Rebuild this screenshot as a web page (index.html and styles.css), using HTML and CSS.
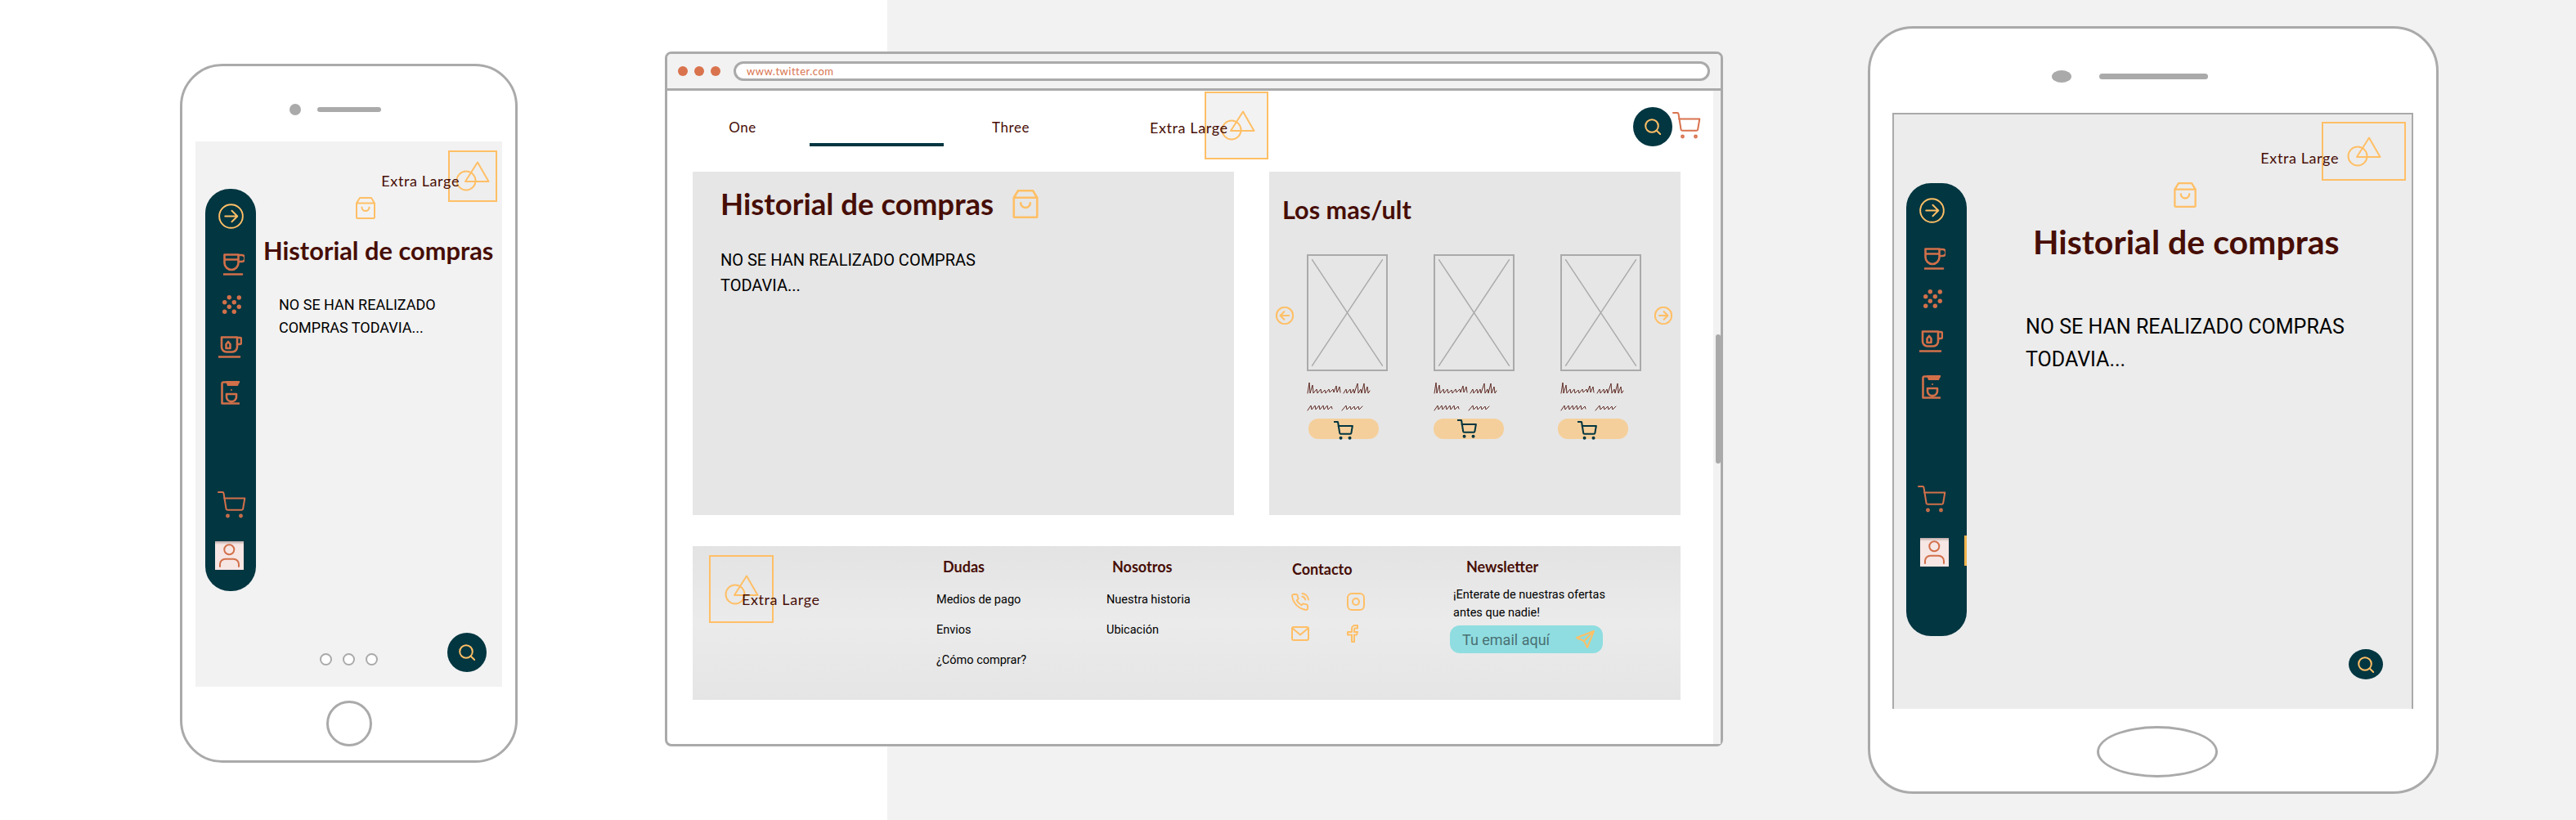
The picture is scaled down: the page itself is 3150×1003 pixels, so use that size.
FILE: index.html
```html
<!DOCTYPE html>
<html lang="es">
<head>
    <meta charset="UTF-8">
    <title>Historial de compras</title>
    <link rel="stylesheet" href="styles.css">
</head>
<body>
<svg class="sprite" xmlns="http://www.w3.org/2000/svg">
    <symbol id="i-logo" viewBox="0 0 42 37"><circle cx="13" cy="24" r="11.5"/><path d="M27 1.5 12 25h28.5z"/></symbol>
    <symbol id="i-arrow-r" viewBox="0 0 32 32"><circle cx="16" cy="16" r="14.8"/><path d="M8.5 16h15M17 9l7 7-7 7"/></symbol>
    <symbol id="i-arrow-l" viewBox="0 0 32 32"><circle cx="16" cy="16" r="14.8"/><path d="M23.5 16h-15M15 9l-7 7 7 7"/></symbol>
    <symbol id="i-cup" viewBox="0 0 26 27"><path d="M1.5 1.5h17v10a8.5 8.5 0 0 1-17 0zM1.5 7.5h17M18.5 2h4a2.5 2.5 0 0 1 0 8h-4M.5 25.5h22.5"/></symbol>
    <symbol id="i-dots" viewBox="0 0 23 23"><g class="solid"><circle cx="8.3" cy="2.7" r="2.7"/><circle cx="20.3" cy="3" r="2.7"/><circle cx="2.7" cy="8.7" r="2.7"/><circle cx="14.3" cy="8.7" r="2.7"/><circle cx="8.3" cy="14.3" r="2.7"/><circle cx="20.3" cy="14.3" r="2.7"/><circle cx="2.7" cy="20.3" r="2.7"/><circle cx="14.3" cy="20.3" r="2.7"/></g></symbol>
    <symbol id="i-tea" viewBox="0 0 29 27"><path d="M4 1.5h19v12a6 6 0 0 1-6 6h-7a6 6 0 0 1-6-6zM23 2h3.5a1.5 1.5 0 0 1 1.5 1.5v5a1.5 1.5 0 0 1-1.5 1.5H23M.5 25.5H26M9.5 10l2.5-3 2.500 3v5h-5z"/></symbol>
    <symbol id="i-machine" viewBox="0 0 23 29"><path d="M1.500 27.500V3a1.500 1.500 0 0 1 1.500-1.500h19M1.500 27.500H22M7 16h12v3.500a5.500 5.500 0 0 1-5.500 5.500H12.500A5.500 5.500 0 0 1 7 19.500z"/><path class="solid" d="M6 0h17l-2 6H8z"/><circle class="solid" cx="13" cy="11" r="1"/></symbol>
    <symbol id="i-cart" viewBox="0 0 35 33"><path d="M1 1h5a1.500 1.500 0 0 1 1.500 1.300L10.500 21a2 2 0 0 0 2 1.800h16.700a2 2 0 0 0 2-1.800L33.300 8.500H8"/><circle cx="12.500" cy="30" r="1.400"/><circle cx="28.500" cy="30" r="1.400"/></symbol>
    <symbol id="i-search" viewBox="0 0 20 20"><circle cx="9" cy="9" r="7.800"/><path d="M14.800 14.800 19.200 19"/></symbol>
    <symbol id="i-bag" viewBox="0 0 24 27"><path d="M1 7.500 5 1h14l4 6.500M1 7.500h22V25a1 1 0 0 1-1 1H2a1 1 0 0 1-1-1zM7.500 12.500a4.500 4.500 0 0 0 9 0"/></symbol>
    <symbol id="i-user" viewBox="0 0 35 35"><circle cx="17.300" cy="10.300" r="6"/><path d="M6 31v-3a6.500 6.500 0 0 1 6.500-6.300h10a6.500 6.500 0 0 1 6.500 6.300v3"/></symbol>
    <symbol id="i-phone" viewBox="0 0 24 24"><path d="M15.050 5A5 5 0 0 1 19 8.950M15.050 1A9 9 0 0 1 23 8.940m-1 7.980v3a2 2 0 0 1-2.180 2 19.790 19.790 0 0 1-8.630-3.070 19.500 19.500 0 0 1-6-6 19.790 19.790 0 0 1-3.070-8.670A2 2 0 0 1 4.110 2h3a2 2 0 0 1 2 1.720 12.840 12.840 0 0 0 .7 2.810 2 2 0 0 1-.45 2.110L8.090 9.910a16 16 0 0 0 6 6l1.270-1.270a2 2 0 0 1 2.110-.45 12.840 12.840 0 0 0 2.810.7A2 2 0 0 1 22 16.920z"/></symbol>
    <symbol id="i-insta" viewBox="0 0 22 22"><rect x="1" y="1" width="20" height="20" rx="5"/><circle cx="11" cy="11" r="4"/></symbol>
    <symbol id="i-mail" viewBox="0 0 22 18"><rect x="1" y="1" width="20" height="16" rx="2"/><path d="m1.500 2.500 9.500 8 9.500-8"/></symbol>
    <symbol id="i-fb" viewBox="0 0 14 22"><path d="M13 1h-3a4 4 0 0 0-4 4v4H1v3.500h5V21h3v-8.500h3l1-3.500H9V5.500a1 1 0 0 1 1-1h3z"/></symbol>
    <symbol id="i-send" viewBox="0 0 23 22"><path d="M22 1 1 9l9 4 4 8zM22 1 10 13"/></symbol>
    <symbol id="i-scribble" viewBox="0 0 82 36"><path d="M1 14 3 1l1 13 3-10 1 10 4-5 1 5 4-5 1 5 4-4 1 4 4-5 1 4 4-4 1 4 3-8 1 8 3-7 1 7M45 14l3-5 1 5 4-5 1 5 3-5 1 5 4-12 1 12 3-5 1 5 3-12 1 12 3-8 1 8 2-3M1 35l4-6 1 5 4-5 1 5 4-5 1 5 4-5 1 5 4-5 1 5 4-4 1 3M43 35l5-6 1 5 4-4 1 4 4-4 1 4 4-4 1 4 4-4"/></symbol>
</svg>

<div class="canvas">

    <!-- telefono -->
    <section class="device phone">
        <div class="device-top">
            <span class="camera"></span>
            <span class="speaker"></span>
        </div>
        <div class="screen">
            <nav class="sidebar">
                <svg class="ic side-arrow"><use href="#i-arrow-r"/></svg>
                <svg class="ic side-cup"><use href="#i-cup"/></svg>
                <svg class="ic side-dots"><use href="#i-dots"/></svg>
                <svg class="ic side-tea"><use href="#i-tea"/></svg>
                <svg class="ic side-machine"><use href="#i-machine"/></svg>
                <svg class="ic side-cart"><use href="#i-cart"/></svg>
                <div class="side-user"><svg class="ic"><use href="#i-user"/></svg></div>
            </nav>
            <div class="screen-main">
                <div class="brand">
                    <span class="brand-name">Extra Large</span>
                    <div class="logo-box"><svg class="ic logo"><use href="#i-logo"/></svg></div>
                </div>
                <svg class="ic bag"><use href="#i-bag"/></svg>
                <h1 class="title">Historial de compras</h1>
                <p class="empty">NO SE HAN REALIZADO<br>COMPRAS TODAVIA...</p>
                <div class="screen-foot">
                    <div class="pager"><span></span><span></span><span></span></div>
                    <button class="search-btn"><svg class="ic"><use href="#i-search"/></svg></button>
                </div>
            </div>
        </div>
        <div class="home"></div>
    </section>

    <!-- navegador -->
    <section class="window">
        <header class="toolbar">
            <span class="light"></span><span class="light"></span><span class="light"></span>
            <div class="address">www.twitter.com</div>
        </header>
        <div class="window-body">
            <div class="page">
                <div class="topnav">
                    <a class="tab">One</a>
                    <a class="tab tab-active"></a>
                    <a class="tab">Three</a>
                    <div class="brand">
                        <span class="brand-name">Extra Large</span>
                        <div class="logo-box"><svg class="ic logo"><use href="#i-logo"/></svg></div>
                    </div>
                    <button class="search-btn"><svg class="ic"><use href="#i-search"/></svg></button>
                    <svg class="ic nav-cart"><use href="#i-cart"/></svg>
                </div>

                <div class="panels">
                    <div class="panel panel-history">
                        <div class="history-head">
                            <h1 class="title">Historial de compras</h1>
                            <svg class="ic bag"><use href="#i-bag"/></svg>
                        </div>
                        <p class="empty">NO SE HAN REALIZADO COMPRAS<br>TODAVIA...</p>
                    </div>
                    <div class="panel panel-top">
                        <h2 class="top-title">Los mas/ult</h2>
                        <div class="carousel">
                            <svg class="ic car-arrow"><use href="#i-arrow-l"/></svg>
                            <div class="product">
                                <div class="thumb"><svg class="thumb-x" viewBox="0 0 87 131" preserveAspectRatio="none"><path d="M0 0 87 131M87 0 0 131"/></svg></div>
                                <svg class="ic scribble"><use href="#i-scribble"/></svg>
                                <button class="buy buy-a"><svg class="ic"><use href="#i-cart"/></svg></button>
                            </div>
                            <div class="product">
                                <div class="thumb"><svg class="thumb-x" viewBox="0 0 87 131" preserveAspectRatio="none"><path d="M0 0 87 131M87 0 0 131"/></svg></div>
                                <svg class="ic scribble"><use href="#i-scribble"/></svg>
                                <button class="buy buy-b"><svg class="ic"><use href="#i-cart"/></svg></button>
                            </div>
                            <div class="product">
                                <div class="thumb"><svg class="thumb-x" viewBox="0 0 87 131" preserveAspectRatio="none"><path d="M0 0 87 131M87 0 0 131"/></svg></div>
                                <svg class="ic scribble"><use href="#i-scribble"/></svg>
                                <button class="buy buy-c"><svg class="ic"><use href="#i-cart"/></svg></button>
                            </div>
                            <svg class="ic car-arrow"><use href="#i-arrow-r"/></svg>
                        </div>
                    </div>
                </div>

                <footer class="footer">
                    <div class="brand">
                        <div class="logo-box"><svg class="ic logo"><use href="#i-logo"/></svg></div>
                        <span class="brand-name">Extra Large</span>
                    </div>
                    <div class="foot-col foot-dudas">
                        <h3>Dudas</h3>
                        <a>Medios de pago</a>
                        <a>Envios</a>
                        <a>¿Cómo comprar?</a>
                    </div>
                    <div class="foot-col foot-nos">
                        <h3>Nosotros</h3>
                        <a>Nuestra historia</a>
                        <a>Ubicación</a>
                    </div>
                    <div class="foot-col foot-contact">
                        <h3>Contacto</h3>
                        <div class="socials">
                            <svg class="ic soc-phone"><use href="#i-phone"/></svg>
                            <svg class="ic soc-insta"><use href="#i-insta"/></svg>
                            <svg class="ic soc-mail"><use href="#i-mail"/></svg>
                            <svg class="ic soc-fb"><use href="#i-fb"/></svg>
                        </div>
                    </div>
                    <div class="foot-col foot-news">
                        <h3>Newsletter</h3>
                        <p>¡Enterate de nuestras ofertas<br>antes que nadie!</p>
                        <div class="email">
                            <span>Tu email aquí</span>
                            <svg class="ic"><use href="#i-send"/></svg>
                        </div>
                    </div>
                </footer>
            </div>
            <div class="scrollbar"><span class="thumb-bar"></span></div>
        </div>
    </section>

    <!-- tablet -->
    <section class="device tablet">
        <div class="device-top">
            <span class="camera"></span>
            <span class="speaker"></span>
        </div>
        <div class="screen">
            <nav class="sidebar">
                <svg class="ic side-arrow"><use href="#i-arrow-r"/></svg>
                <svg class="ic side-cup"><use href="#i-cup"/></svg>
                <svg class="ic side-dots"><use href="#i-dots"/></svg>
                <svg class="ic side-tea"><use href="#i-tea"/></svg>
                <svg class="ic side-machine"><use href="#i-machine"/></svg>
                <svg class="ic side-cart"><use href="#i-cart"/></svg>
                <div class="side-user"><svg class="ic"><use href="#i-user"/></svg></div>
                <span class="side-mark"></span>
            </nav>
            <div class="screen-main">
                <div class="brand">
                    <span class="brand-name">Extra Large</span>
                    <div class="logo-box"><svg class="ic logo"><use href="#i-logo"/></svg></div>
                </div>
                <svg class="ic bag"><use href="#i-bag"/></svg>
                <h1 class="title">Historial de compras</h1>
                <p class="empty">NO SE HAN REALIZADO COMPRAS<br>TODAVIA...</p>
                <div class="screen-foot">
                    <button class="search-btn"><svg class="ic"><use href="#i-search"/></svg></button>
                </div>
            </div>
        </div>
        <div class="home"></div>
    </section>

</div>
</body>
</html>
```

FILE: styles.css
```css
* {
    box-sizing: border-box;
}
body {
    margin: 0;
    font-family: Roboto, sans-serif;
    color: #000;
    overflow: hidden;
}
.sprite {
    display: none;
}
.canvas {
    position: relative;
    width: 3150px;
    height: 1003px;
    background: linear-gradient(to right, #fff 1085px, #f2f2f2 1085px);
}
.ic {
    display: block;
    fill: none;
    stroke: currentColor;
    stroke-width: 2;
    stroke-linecap: round;
    stroke-linejoin: round;
    flex: none;
}
.solid {
    fill: currentColor;
    stroke: none;
}
button {
    padding: 0;
    border: 0;
    font: inherit;
}

/* piezas comunes */
.brand {
    display: flex;
    align-items: flex-start;
}
.brand-name {
    position: relative;
    font-family: "Lato", sans-serif;
    font-size: 18px;
    line-height: 20px;
    letter-spacing: 0.6px;
    color: #470e06;
    white-space: nowrap;
}
.logo-box {
    flex: none;
    border: 2px solid #ffbf66;
    color: #ffbf66;
}
.logo {
    width: 42px;
    height: 37px;
}
.title {
    margin: 0;
    font-family: "Lato", sans-serif;
    font-weight: 700;
    color: #470e06;
    white-space: nowrap;
}
.bag {
    color: #ffbf66;
}
.empty {
    margin: 0;
    white-space: nowrap;
}
.search-btn {
    display: flex;
    align-items: center;
    justify-content: center;
    flex: none;
    width: 48px;
    height: 48px;
    border-radius: 50%;
    background: #023641;
    color: #ffbf66;
}
.search-btn .ic {
    width: 20px;
    height: 20px;
}

/* telefono y tablet */
.device {
    position: absolute;
    display: flex;
    flex-direction: column;
    background: #fff;
    border: 3px solid #aaa;
}
.device-top {
    display: flex;
    align-items: center;
}
.camera {
    background: #aaa;
    border-radius: 50%;
}
.speaker {
    background: #aaa;
    border-radius: 4px;
}
.screen {
    display: flex;
}
.screen-main {
    display: flex;
    flex-direction: column;
    flex: 1;
    min-width: 0;
}
.screen-foot {
    display: flex;
    margin-top: auto;
}
.screen-foot .search-btn {
    margin-left: auto;
}
.home {
    border: 3px solid #aaa;
    border-radius: 50%;
    background: #fff;
}
.sidebar {
    position: relative;
    display: flex;
    flex-direction: column;
    flex: none;
    background: #023641;
    border-radius: 30px;
    color: #d2704a;
    stroke-width: 2.4;
}
.side-arrow {
    width: 31px;
    height: 31px;
    margin: 18px 0 0 16px;
    color: #ffbf66;
}
.side-cup {
    width: 26px;
    height: 27px;
    margin: 30px 0 0 22px;
    stroke-width: 2.6;
}
.side-dots {
    width: 23px;
    height: 23px;
    margin: 24px 0 0 21px;
}
.side-tea {
    width: 29px;
    height: 27px;
    margin: 27px 0 0 16px;
    stroke-width: 2.6;
}
.side-machine {
    width: 23px;
    height: 29px;
    margin: 28px 0 0 19px;
    stroke-width: 2.6;
}
.side-cart {
    width: 35px;
    height: 33px;
    margin: 106px 0 0 15px;
}
.side-user {
    width: 35px;
    height: 35px;
    margin: 28px 0 0 12px;
    background: linear-gradient(#b9a8a6, #f6e6e4 4px);
}
.side-user .ic {
    width: 35px;
    height: 35px;
}
.side-mark {
    position: absolute;
    right: 0;
    top: 431px;
    width: 3px;
    height: 37px;
    background: #f0b44f;
}

.phone {
    left: 220px;
    top: 78px;
    width: 413px;
    height: 855px;
    padding: 0 16px;
    border-radius: 52px;
}
.phone .device-top {
    height: 92px;
    padding: 14px 0 0 115px;
    gap: 20px;
}
.phone .camera {
    width: 14px;
    height: 14px;
}
.phone .speaker {
    width: 78px;
    height: 6px;
}
.phone .screen {
    width: 375px;
    height: 667px;
    background: #f2f2f2;
}
.phone .sidebar {
    width: 62px;
    height: 492px;
    margin: 58px 0 0 12px;
}
.phone .brand {
    margin-top: 11px;
    padding-right: 6px;
    justify-content: flex-end;
}
.phone .brand-name {
    margin: 27px -14px 0 0;
}
.phone .logo-box {
    width: 60px;
    height: 63px;
    padding: 11px 0 0 7px;
    background: #eee;
}
.phone .bag {
    width: 24px;
    height: 27px;
    margin: -6px 0 0 122px;
}
.phone .title {
    margin: 21px 0 0 9px;
    font-size: 30.8px;
    line-height: 36px;
}
.phone .empty {
    margin: 34px 0 0 28px;
    font-size: 18px;
    line-height: 28px;
}
.phone .screen-foot {
    align-items: flex-end;
    padding: 0 19px 18px 78px;
}
.pager {
    display: flex;
    gap: 13px;
    margin-bottom: 8px;
}
.pager span {
    width: 15px;
    height: 15px;
    border: 2px solid #aaa;
    border-radius: 50%;
    background: #fff;
}
.phone .home {
    width: 56px;
    height: 56px;
    margin: 17px 0 0 160px;
}

.tablet {
    left: 2284px;
    top: 32px;
    width: 698px;
    height: 939px;
    padding: 0 27px;
    border-radius: 55px;
}
.tablet .device-top {
    height: 103px;
    padding: 14px 0 0 195px;
    gap: 34px;
}
.tablet .camera {
    width: 24px;
    height: 15px;
}
.tablet .speaker {
    width: 133px;
    height: 7px;
}
.tablet .screen {
    width: 637px;
    height: 729px;
    background: #ececec;
    border: 2px solid #aaa;
    border-bottom: 0;
}
.tablet .sidebar {
    width: 74px;
    height: 554px;
    margin: 84px 0 0 15px;
}
.tablet .side-cart {
    margin-left: 14px;
}
.tablet .side-user {
    margin: 31px 0 0 17px;
}
.tablet .brand {
    margin-top: 9px;
    padding-right: 7px;
    justify-content: flex-end;
}
.tablet .brand-name {
    margin: 34px -21px 0 0;
}
.tablet .logo-box {
    width: 103px;
    height: 72px;
    padding: 16px 0 0 29px;
}
.tablet .bag {
    width: 28px;
    height: 31px;
    margin: 2px 0 0 253px;
}
.tablet .title {
    margin: 18px 0 0 81px;
    font-size: 41px;
    line-height: 48px;
}
.tablet .empty {
    margin: 60px 0 0 72px;
    font-size: 25px;
    line-height: 40px;
}
.tablet .screen-foot {
    padding: 0 35px 36px 0;
}
.tablet .search-btn {
    width: 42px;
    height: 37px;
}
.tablet .home {
    width: 148px;
    height: 63px;
    margin: 21px 0 0 250px;
}

/* navegador */
.window {
    position: absolute;
    left: 813px;
    top: 63px;
    width: 1294px;
    height: 850px;
    display: flex;
    flex-direction: column;
    background: #fff;
    border: 3px solid #aaa;
    border-radius: 8px;
}
.toolbar {
    display: flex;
    align-items: center;
    flex: none;
    height: 45px;
    padding: 0 13px 0 13px;
    gap: 8px;
    background: #f2f2f2;
    border-bottom: 3px solid #aaa;
    border-radius: 5px 5px 0 0;
}
.light {
    width: 12px;
    height: 12px;
    border-radius: 50%;
    background: #d9734e;
}
.address {
    flex: 1;
    height: 24px;
    margin-left: 8px;
    padding-left: 13px;
    background: #fff;
    border: 3px solid #aaa;
    border-radius: 12px;
    font-family: "Lato", sans-serif;
    font-size: 13px;
    line-height: 19px;
    letter-spacing: 0.5px;
    color: #d9734e;
}
.window-body {
    display: flex;
    flex: 1;
    min-height: 0;
}
.page {
    flex: 1;
    min-width: 0;
}
.scrollbar {
    flex: none;
    width: 9px;
    padding: 298px 0 0 3px;
    background: #f2f2f2;
}
.thumb-bar {
    display: block;
    width: 6px;
    height: 158px;
    border-radius: 3px;
    background: #aaa;
}
.topnav {
    display: flex;
    align-items: flex-start;
    padding: 1px 0 0 10px;
}
.tab {
    width: 164px;
    height: 67px;
    padding-top: 34px;
    text-align: center;
    font-family: "Lato", sans-serif;
    font-size: 17px;
    line-height: 20px;
    letter-spacing: 0.6px;
    color: #470e06;
}
.tab-active {
    border-bottom: 4px solid #023641;
}
.topnav .brand {
    margin-left: 88px;
}
.topnav .brand-name {
    margin: 34px -29px 0 0;
}
.topnav .logo-box {
    width: 78px;
    height: 83px;
    padding: 21px 0 0 18px;
    background: #f2f2f2;
}
.topnav .search-btn {
    margin: 19px 0 0 446px;
}
.nav-cart {
    width: 35px;
    height: 33px;
    margin-top: 25px;
    color: #d9734e;
}
.panels {
    display: flex;
    gap: 43px;
    margin: 15px 0 0 31px;
}
.panel {
    height: 420px;
    background: #e6e6e6;
}
.panel-history {
    width: 662px;
    padding: 18px 0 0 34px;
}
.history-head {
    display: flex;
    align-items: flex-start;
    gap: 23px;
}
.panel-history .title {
    font-size: 36.6px;
    line-height: 42px;
}
.panel-history .bag {
    width: 32px;
    height: 35px;
    margin-top: 4px;
}
.panel-history .empty {
    margin-top: 33px;
    font-size: 20px;
    line-height: 31px;
}
.panel-top {
    width: 503px;
    padding: 29px 0 0 8px;
}
.top-title {
    margin: 0 0 0 8px;
    font-family: "Lato", sans-serif;
    font-weight: 700;
    font-size: 30.6px;
    line-height: 36px;
    color: #470e06;
}
.carousel {
    display: flex;
    align-items: flex-start;
    margin-top: 36px;
}
.car-arrow {
    width: 22px;
    height: 22px;
    margin-top: 64px;
    color: #ffbf66;
    stroke-width: 3;
}
.carousel .product {
    margin-left: 16px;
}
.carousel .product + .product {
    margin-left: 56px;
}
.carousel .product + .car-arrow {
    margin-left: 16px;
}
.product {
    width: 99px;
}
.thumb {
    height: 143px;
    padding: 4px;
    border: 2px solid #aaa;
}
.thumb-x {
    display: block;
    width: 100%;
    height: 100%;
    fill: none;
    stroke: #aaa;
    stroke-width: 1.5;
}
.scribble {
    width: 82px;
    height: 36px;
    margin-top: 13px;
    color: #5f2b25;
    stroke-width: 1;
}
.buy {
    display: block;
    position: relative;
    width: 86px;
    height: 25px;
    margin-top: 9px;
    border-radius: 12px;
    background: #f5cf9b;
    color: #023641;
}
.buy .ic {
    position: absolute;
    top: 3px;
    width: 24px;
    height: 23px;
    stroke-width: 3;
}
.buy-a {
    margin-left: 2px;
}
.buy-a .ic {
    left: 31px;
}
.buy-b .ic {
    left: 29px;
    top: 1px;
}
.buy-c {
    margin-left: -3px;
}
.buy-c .ic {
    left: 24px;
}
.footer {
    display: grid;
    grid-template-columns: 278px 208px 225px 195px 1fr;
    width: 1208px;
    height: 188px;
    margin: 38px 0 0 31px;
    padding: 11px 0 0 20px;
    background: linear-gradient(#e3e3e3, #ebebeb 50%, #e5e5e5);
}
.footer .brand-name {
    margin: 44px 0 0 -39px;
}
.footer .logo-box {
    width: 79px;
    height: 83px;
    padding: 22px 0 0 17px;
}
.foot-col {
    display: flex;
    flex-direction: column;
    align-items: flex-start;
    font-size: 14.5px;
}
.foot-col h3 {
    margin: 2px 0 0;
    font-family: "Lato", sans-serif;
    font-weight: 700;
    font-size: 18px;
    line-height: 24px;
    color: #470e06;
}
.foot-col a {
    line-height: 20px;
    margin-top: 17px;
}
.foot-col h3 + a {
    margin-top: 19px;
}
.foot-dudas h3 {
    margin-left: 8px;
}
.foot-nos h3 {
    margin-left: 7px;
}
.foot-contact h3 {
    margin: 5px 0 0 2px;
}
.socials {
    display: grid;
    grid-template-columns: 69px auto;
    grid-auto-rows: 39px;
    margin-top: 17px;
    color: #ffbf66;
}
.soc-phone {
    width: 23px;
    height: 23px;
}
.soc-insta {
    width: 22px;
    height: 22px;
}
.soc-mail {
    width: 22px;
    height: 18px;
    margin: 2px 0 0 1px;
}
.soc-fb {
    width: 14px;
    height: 22px;
}
.foot-news {
    padding-left: 4px;
}
.foot-news h3 {
    margin-left: 16px;
}
.foot-news p {
    margin: 12px 0 0;
    line-height: 22px;
    white-space: nowrap;
}
.email {
    display: flex;
    align-items: center;
    justify-content: space-between;
    width: 187px;
    height: 34px;
    margin: 4px 0 0 -4px;
    padding: 0 10px 0 15px;
    border-radius: 12px;
    background: #8fdde0;
    font-size: 18px;
    color: #4a7074;
}
.email .ic {
    width: 23px;
    height: 22px;
    color: #ffbf66;
}
```
